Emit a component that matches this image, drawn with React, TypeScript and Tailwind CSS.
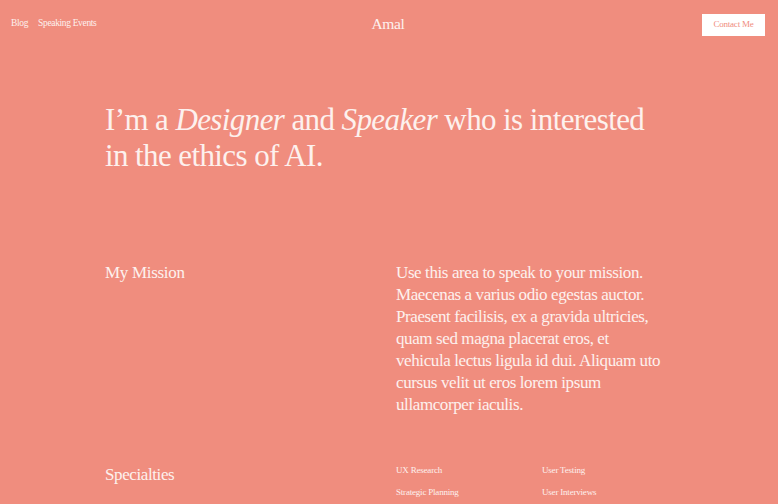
const specialties = ["UX Research", "User Testing", "Strategic Planning", "User Interviews"];

export default function App() {
  return (
    <div className="min-h-screen bg-[#f08d7e] text-[#fdf1ee] overflow-hidden" style={{ fontFamily: '"Liberation Serif", serif' }}>
      <header className="flex items-center justify-between h-[47px] pl-[11px] pr-[13px]">
        <nav className="flex gap-[10px] text-[9.5px] tracking-[-0.35px] w-[200px]">
          <span>Blog</span>
          <span>Speaking Events</span>
        </nav>
        <div className="text-[15.5px] tracking-[-0.4px]">Amal</div>
        <div className="w-[200px] flex justify-end">
          <button className="bg-white text-[#f08d7e] text-[9px] tracking-[-0.2px] w-[63px] h-[22px] mt-[2px]">Contact Me</button>
        </div>
      </header>

      <section className="pl-[105px] pt-[55px] pb-[88px]">
        <h1 className="text-[31px] leading-[36px] tracking-[-0.6px] whitespace-nowrap">
          I’m a <em>Designer</em> and <em>Speaker</em> who is interested
          <br />
          in the ethics of AI.
        </h1>
      </section>

      <section className="grid grid-cols-[291px_1fr] pl-[105px]">
        <h2 className="text-[17px] leading-[22px] tracking-[-0.3px]">My Mission</h2>
        <p className="text-[17px] leading-[22px] tracking-[-0.4px] whitespace-nowrap">
          Use this area to speak to your mission.
          <br />
          Maecenas a varius odio egestas auctor.
          <br />
          Praesent facilisis, ex a gravida ultricies,
          <br />
          quam sed magna placerat eros, et
          <br />
          vehicula lectus ligula id dui. Aliquam uto
          <br />
          cursus velit ut eros lorem ipsum
          <br />
          ullamcorper iaculis.
        </p>
      </section>

      <section className="grid grid-cols-[291px_1fr] pl-[105px] pt-[44px]">
        <h2 className="text-[17px] leading-[24px] tracking-[-0.4px] pt-[3px]">Specialties</h2>
        <ul className="grid grid-cols-[146px_146px] gap-y-[8px] pt-[3px] text-[9px] tracking-[-0.2px] leading-[14px]">
          {specialties.map((s) => (
            <li key={s}>{s}</li>
          ))}
        </ul>
      </section>
    </div>
  );
}
